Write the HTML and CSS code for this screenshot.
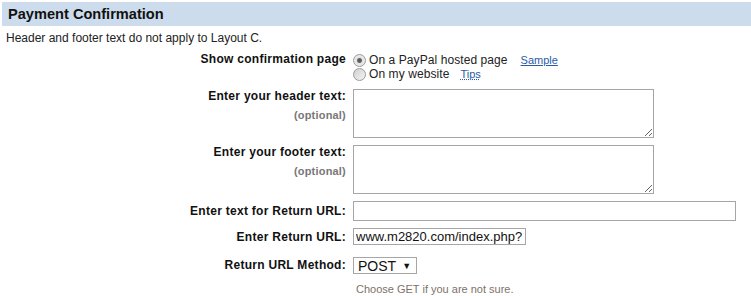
FILE: index.html
```html
<!DOCTYPE html>
<html lang="en">
<head>
  <meta charset="UTF-8">
  <meta name="viewport" content="width=device-width, initial-scale=1.0">
  <title>Payment Confirmation</title>
  <link rel="stylesheet" href="styles.css">
</head>
<body>
  <h2 class="section-head">Payment Confirmation</h2>
  <p class="note">Header and footer text do not apply to Layout C.</p>

  <div class="form">
    <div class="label">Show confirmation page</div>
    <div class="field radios">
      <label class="radio">
        <input type="radio" name="confirm" checked>
        <span>On a PayPal hosted page</span>
        <a href="#" class="link">Sample</a>
      </label>
      <label class="radio">
        <input type="radio" name="confirm">
        <span>On my website</span>
        <a href="#" class="link tips">Tips</a>
      </label>
    </div>

    <div class="label">
      Enter your header text:
      <span class="optional">(optional)</span>
    </div>
    <div class="field">
      <textarea class="area"></textarea>
    </div>

    <div class="label">
      Enter your footer text:
      <span class="optional">(optional)</span>
    </div>
    <div class="field">
      <textarea class="area"></textarea>
    </div>

    <div class="label mid">Enter text for Return URL:</div>
    <div class="field">
      <input type="text" class="text wide">
    </div>

    <div class="label mid">Enter Return URL:</div>
    <div class="field">
      <input type="text" class="text url" value="www.m2820.com/index.php?">
    </div>

    <div class="label method">Return URL Method:</div>
    <div class="field method-field">
      <div class="select">POST <span class="arrow">&#9660;</span></div>
      <div class="hint">Choose GET if you are not sure.</div>
    </div>
  </div>
</body>
</html>
```

FILE: styles.css
```css
* {
  box-sizing: border-box;
}

body {
  margin: 0;
  font-family: "Liberation Sans", Arial, sans-serif;
  font-size: 12px;
  color: #222;
  background: #fff;
}

.section-head {
  margin: 2px 0 0 2px;
  height: 24px;
  padding-left: 6px;
  background: #ccdcec;
  font-size: 14.6px;
  line-height: 24px;
  font-weight: bold;
  color: #111;
}

.note {
  margin: 5px 0 0 6px;
  line-height: 14px;
}

.form {
  display: grid;
  grid-template-columns: 346px auto;
  column-gap: 7px;
  row-gap: 7px;
  margin-top: 7px;
}

.form .label {
  text-align: right;
  font-weight: bold;
  line-height: 14px;
  letter-spacing: 0.28px;
  color: #111;
}

.form .label.mid {
  align-self: center;
}

.form .label.method {
  margin-top: 6px;
}

.form .label .optional {
  display: block;
  margin-top: 5px;
  font-size: 11px;
  letter-spacing: 0.2px;
  color: #777;
}

.radios {
  display: flex;
  flex-direction: column;
  margin-top: 1px;
  margin-bottom: 1px;
}

.radio {
  display: flex;
  align-items: center;
  height: 14px;
  line-height: 14px;
  letter-spacing: 0.08px;
}

.radio input {
  appearance: none;
  width: 13px;
  height: 13px;
  margin: 0 3px 0 0;
  border: 1px solid #9a9a9a;
  border-radius: 50%;
  background: linear-gradient(135deg, #d0d0d0, #f4f4f4);
}

.radio input:checked {
  background: radial-gradient(circle, #555 0, #666 2px, #e4e4e4 3px, #f0f0f0 100%);
}

.link {
  margin-left: 13px;
  font-size: 11px;
  letter-spacing: 0;
  color: #2a5ca8;
}

.radio:nth-child(2) .link {
  margin-left: 11px;
}

.link.tips {
  text-decoration: underline dotted;
}

.area {
  display: block;
  width: 301px;
  height: 49px;
  margin: 0;
  border: 1px solid #a6a6a6;
  font-family: inherit;
}

.text {
  display: block;
  margin: 0;
  border: 1px solid #a6a6a6;
  font-family: inherit;
  font-size: 13px;
  color: #111;
}

.text.wide {
  width: 383px;
  height: 20px;
}

.text.url {
  width: 173px;
  height: 17px;
  padding: 0 0 0 2px;
}

.method-field {
  margin-top: 5px;
}

.select {
  display: flex;
  align-items: center;
  width: 64px;
  height: 17px;
  padding-left: 4px;
  border: 1px solid #a6a6a6;
  font-size: 14px;
  color: #111;
}

.select .arrow {
  margin-left: 6px;
  font-size: 9px;
}

.hint {
  margin-top: 9px;
  margin-left: 3px;
  font-size: 11px;
  color: #7d7268;
}
```
